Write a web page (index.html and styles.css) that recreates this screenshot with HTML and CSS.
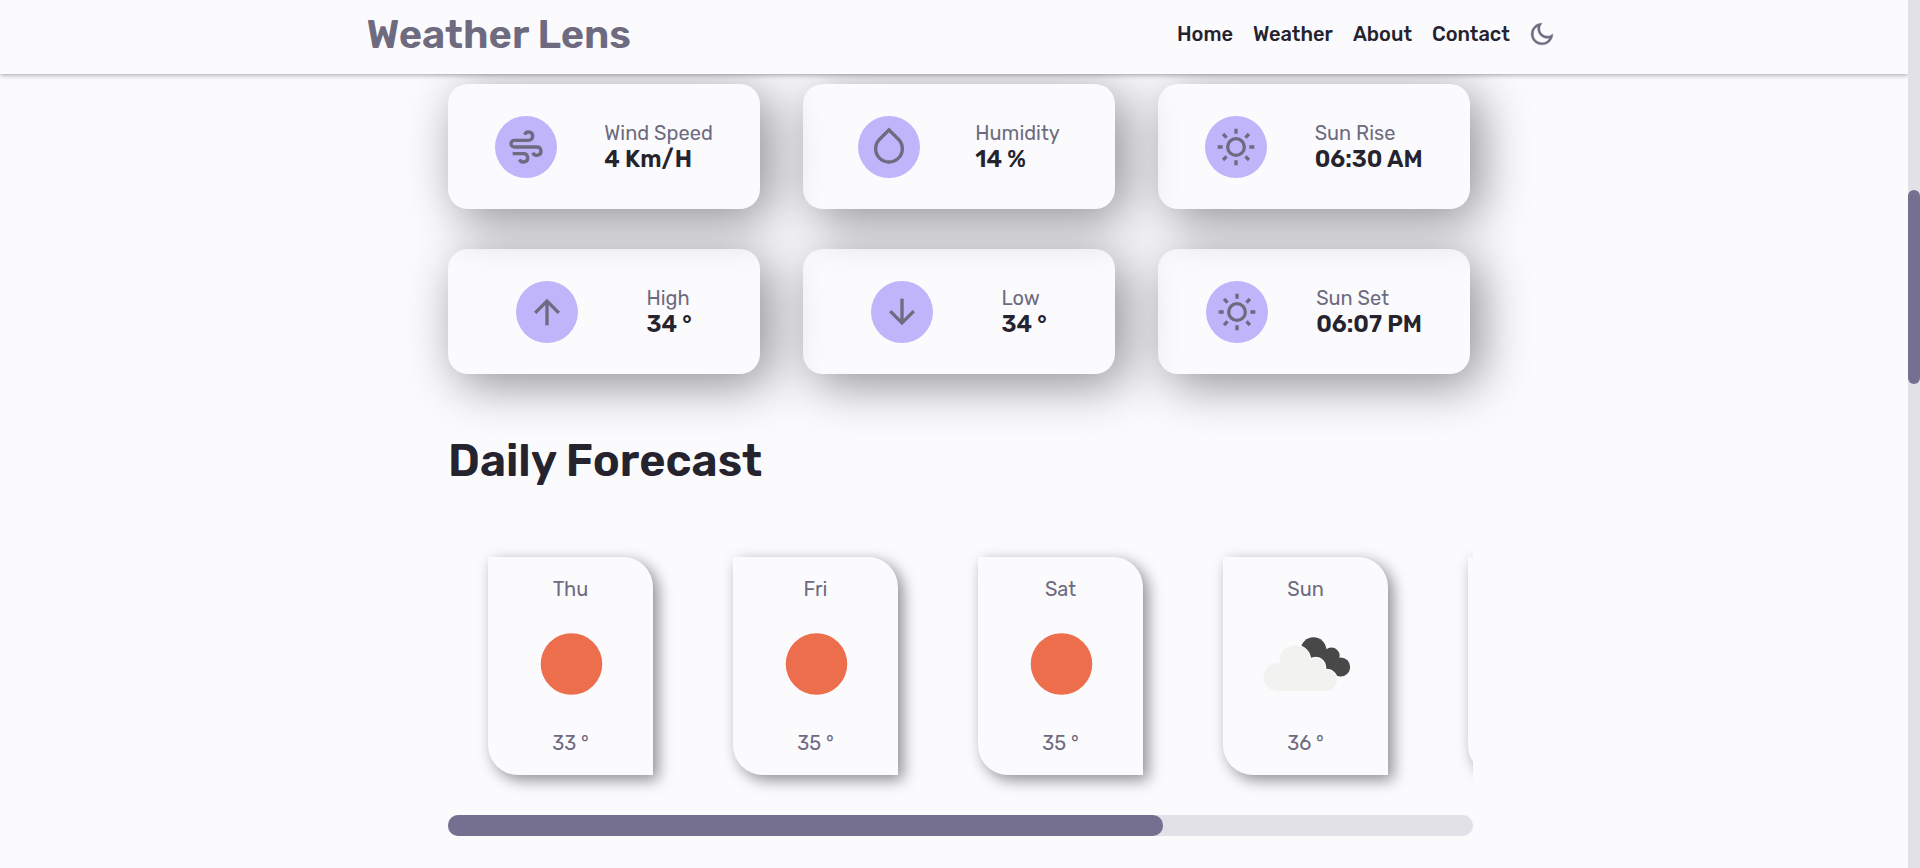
FILE: index.html
```html
<!DOCTYPE html>
<html lang="en">
<head>
<meta charset="utf-8">
<title>Weather Lens</title>
<link rel="stylesheet" href="styles.css">
</head>
<body>
<svg class="defs" width="0" height="0">
  <symbol id="sun" viewBox="0 0 24 24"><path d="M12 18a6 6 0 1 1 0-12 6 6 0 0 1 0 12zm0-2a4 4 0 1 0 0-8 4 4 0 0 0 0 8zM11 1h2v3h-2V1zm0 19h2v3h-2v-3zM3.515 4.929l1.414-1.414L7.05 5.636 5.636 7.05 3.515 4.93zM16.95 18.364l1.414-1.414 2.121 2.121-1.414 1.414-2.121-2.121zm2.121-14.85l1.414 1.415-2.121 2.121-1.414-1.414 2.121-2.121zM5.636 16.95l1.414 1.414-2.121 2.121-1.414-1.414 2.121-2.121zM23 11v2h-3v-2h3zM4 11v2H1v-2h3z"/></symbol>
</svg>
<div class="page">
  <div class="view">
    <header class="header">
      <div class="nav">
        <a class="logo">Weather Lens</a>
        <nav class="links">
          <a class="l-home">Home</a><a class="l-weather">Weather</a><a class="l-about">About</a><a class="l-contact">Contact</a>
          <svg class="moon" viewBox="0 0 24 24"><path d="M10 7a7 7 0 0 0 12 4.9v.1c0 5.523-4.477 10-10 10S2 17.523 2 12 6.477 2 12 2h.1A6.979 6.979 0 0 0 10 7zm-6 5a8 8 0 0 0 15.062 3.762A9 9 0 0 1 8.238 4.938 7.999 7.999 0 0 0 4 12z"/></svg>
        </nav>
      </div>
    </header>
    <main class="main">
      <section class="stats">
        <div class="stat">
          <div class="dot"><svg viewBox="0 0 24 24"><path d="M10.5 17H4v-2h6.5a3.5 3.5 0 1 1-3.278 4.73l1.873-.703A1.5 1.5 0 1 0 10.5 17zM5 11h13.5a3.5 3.5 0 1 1-3.278 4.73l1.873-.703A1.5 1.5 0 1 0 18.5 13H5a3 3 0 0 1 0-6h8.5a1.5 1.5 0 1 0-1.405-2.027l-1.873-.702A3.5 3.5 0 1 1 13.5 9H5a1 1 0 1 0 0 2z"/></svg></div>
          <div class="info"><p>Wind Speed</p><h3>4 Km/H</h3></div>
        </div>
        <div class="stat">
          <div class="dot"><svg viewBox="0 0 24 24"><path d="M12 3.1L7.05 8.05a7 7 0 1 0 9.9 0L12 3.1zm0-2.83l6.364 6.366a9 9 0 1 1-12.728 0L12 .27z"/></svg></div>
          <div class="info"><p>Humidity</p><h3>14 %</h3></div>
        </div>
        <div class="stat">
          <div class="dot"><svg><use href="#sun"/></svg></div>
          <div class="info"><p>Sun Rise</p><h3>06:30 AM</h3></div>
        </div>
        <div class="stat">
          <div class="dot"><svg viewBox="0 0 24 24"><path d="M13 7.828V20h-2V7.828l-5.364 5.364-1.414-1.414L12 4l7.778 7.778-1.414 1.414L13 7.828z"/></svg></div>
          <div class="info"><p>High</p><h3>34 °</h3></div>
        </div>
        <div class="stat">
          <div class="dot"><svg viewBox="0 0 24 24"><path d="M13 16.172l5.364-5.364 1.414 1.414L12 20l-7.778-7.778 1.414-1.414L11 16.172V4h2v12.172z"/></svg></div>
          <div class="info"><p>Low</p><h3>34 °</h3></div>
        </div>
        <div class="stat">
          <div class="dot"><svg><use href="#sun"/></svg></div>
          <div class="info"><p>Sun Set</p><h3>06:07 PM</h3></div>
        </div>
      </section>
      <h2 class="title">Daily Forecast</h2>
      <section class="days">
        <div class="day"><p>Thu</p><svg viewBox="0 0 100 100"><circle cx="50.500" cy="50" r="30.800" fill="#ec6e4c"/></svg><p>33 °</p></div>
        <div class="day"><p>Fri</p><svg viewBox="0 0 100 100"><circle cx="50.500" cy="50" r="30.800" fill="#ec6e4c"/></svg><p>35 °</p></div>
        <div class="day"><p>Sat</p><svg viewBox="0 0 100 100"><circle cx="50.500" cy="50" r="30.800" fill="#ec6e4c"/></svg><p>35 °</p></div>
        <div class="day"><p>Sun</p>
          <svg viewBox="0 0 300 300">
            <g fill="#484849"><circle cx="172.500" cy="108" r="38.500"/><circle cx="226.500" cy="125" r="24.500"/><circle cx="254" cy="159" r="28.500"/><path d="M150 110L205 100L250 135L250 187L180 160z"/></g>
            <g class="cloud-edge"><circle cx="116.500" cy="140" r="47"/><circle cx="179.500" cy="160" r="29"/><circle cx="211.500" cy="199" r="32"/></g>
            <g fill="#f2f2f0"><circle cx="64.500" cy="189" r="42"/><circle cx="116.500" cy="140" r="47"/><circle cx="179.500" cy="160" r="27"/><circle cx="211.500" cy="199" r="32"/><path d="M64 150L180 135L212 180V231H64z"/></g>
          </svg><p>36 °</p></div>
        <div class="day"></div>
      </section>
      <div class="track"><div class="track-thumb"></div></div>
    </main>
  </div>
  <div class="scroll"><div class="scroll-thumb"></div></div>
</div>
</body>
</html>
```
FILE: styles.css
```css
* { box-sizing: border-box; margin: 0; padding: 0; }
body {
  background: #fbfbfe;
  font-family: Rubik, Roboto, "Liberation Sans", sans-serif;
  color: #25232e;
  overflow: hidden;
}
.defs { display: block; }
.page { display: flex; height: 868px; }
.view { flex: 1; overflow: hidden; }

.header {
  position: relative;
  z-index: 2;
  height: 74px;
  background: #fbfbfe;
  box-shadow: 0 1px 5px rgba(0, 0, 0, .36);
}
.nav {
  display: flex;
  justify-content: space-between;
  width: 1188.5px;
  height: 68px;
  margin-left: 366.5px;
  align-items: center;
}
.logo { padding-top: 1px; font-size: 40px; font-weight: 600; color: #6e6b80; line-height: 48px; white-space: nowrap; }
.links { display: flex; align-items: center; font-size: 20px; font-weight: 500; line-height: 24px; white-space: nowrap; }
.l-home { width: 76px; }
.l-weather { width: 100px; }
.l-about { width: 79px; }
.l-contact { width: 97px; }
.moon { width: 26px; height: 26px; fill: #6e6b80; stroke: #6e6b80; stroke-width: .4; }

.main { width: 1025px; margin-left: 448px; padding-top: 10px; }
.stats { display: grid; grid-template-columns: repeat(3, 312px); gap: 40px 43px; }
.stat {
  display: flex;
  align-items: center;
  justify-content: space-evenly;
  height: 125px;
  border-radius: 20px;
  box-shadow: 10px 10px 50px rgba(0, 0, 0, .44);
}
.dot {
  display: flex;
  align-items: center;
  justify-content: center;
  width: 62px;
  height: 62px;
  border-radius: 50%;
  background: #c0b5fb;
}
.dot svg { width: 40px; height: 40px; fill: #6e6b80; }
.info { white-space: nowrap; }
.info p { font-size: 20px; line-height: 24px; color: #6e6b80; }
.info h3 { font-size: 23.4px; line-height: 28px; font-weight: 600; }

.title { margin-top: 60px; font-size: 45px; line-height: 53px; font-weight: 600; white-space: nowrap; }

.days { display: flex; gap: 80px; margin-top: 30px; padding: 40px; overflow: hidden; }
.day {
  display: flex;
  flex: none;
  flex-direction: column;
  align-items: center;
  width: 165px;
  height: 218px;
  padding-top: 20px;
  border-radius: 0 30px 0 30px;
  box-shadow: 5px 5px 15px rgba(0, 0, 0, .44);
}
.day p { font-size: 20px; line-height: 24px; color: #6e6b80; }
.day svg { width: 100px; height: 100px; margin: 13px 0 17px; }
.cloud-edge { fill: #fff; stroke: #fff; stroke-width: 5; }
.track { height: 21px; border-radius: 10px; background: #e2e1e8; }
.track-thumb { width: 715px; height: 21px; border-radius: 10px; background: #757090; }

.scroll { width: 12px; padding-top: 190px; background: #e2e1e8; }
.scroll-thumb { height: 194px; border-radius: 6px; background: #757090; }
```
